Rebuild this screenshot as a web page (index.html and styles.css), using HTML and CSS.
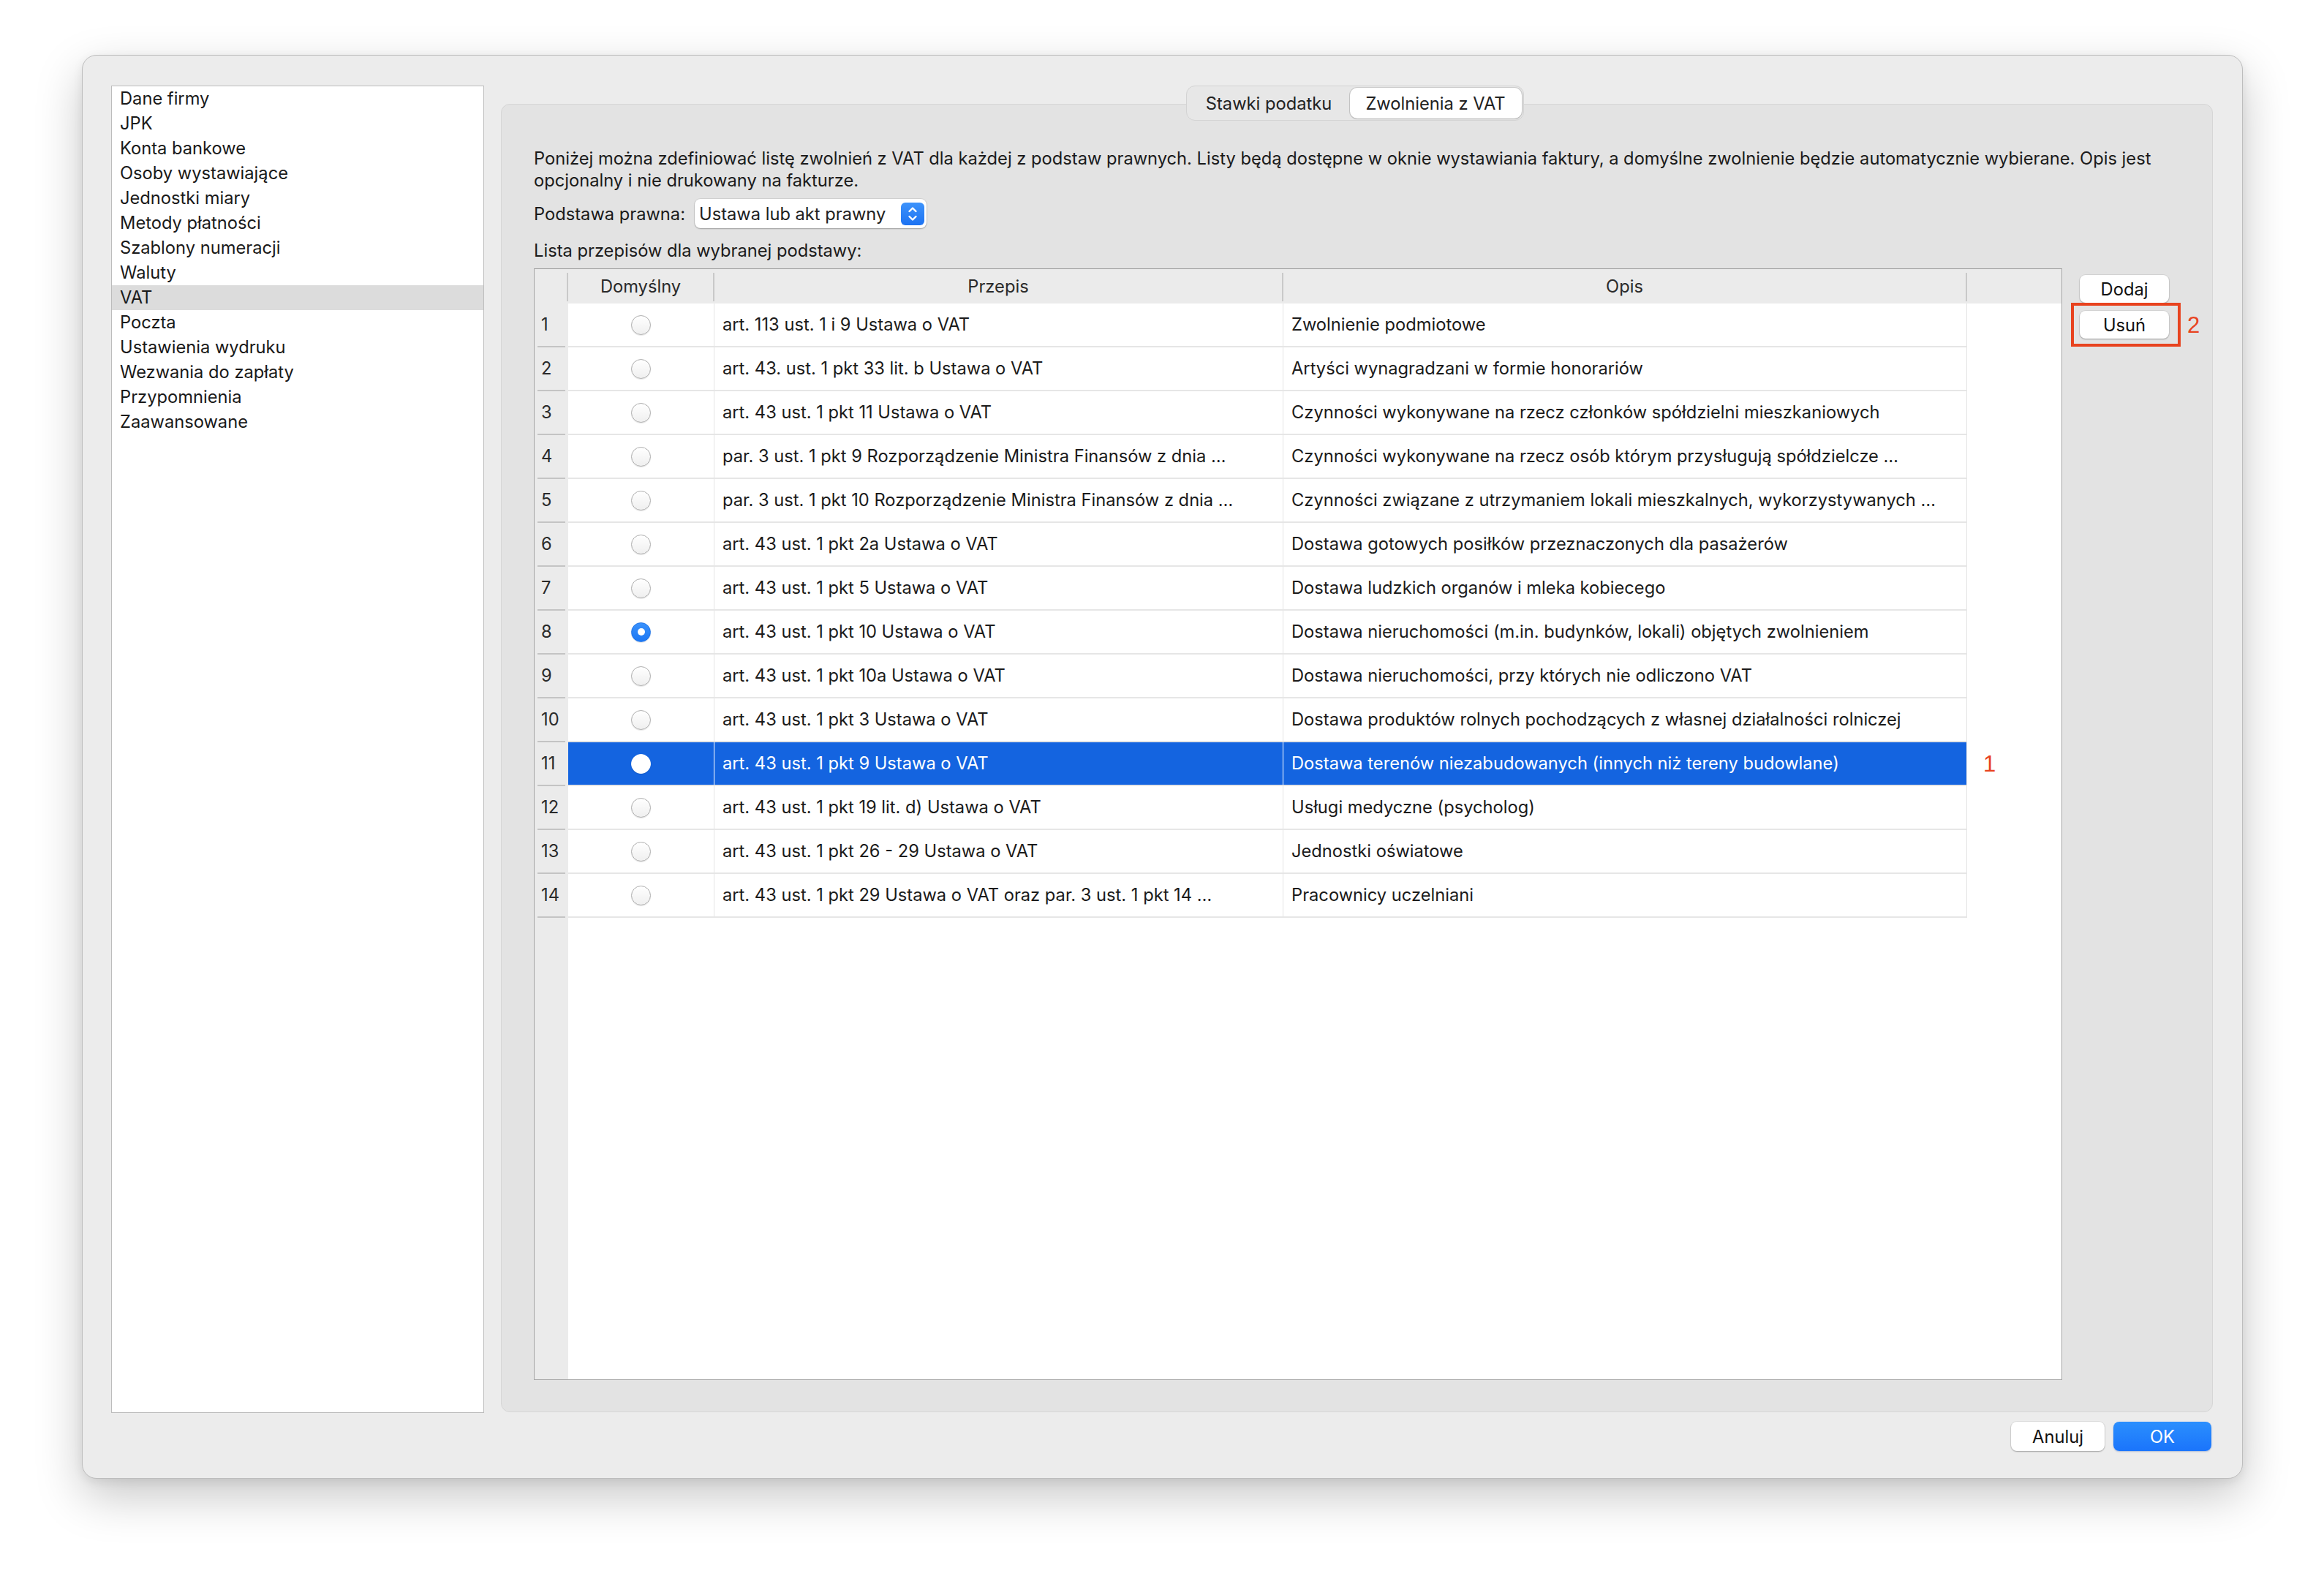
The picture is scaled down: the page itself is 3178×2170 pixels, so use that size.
FILE: index.html
```html
<!DOCTYPE html>
<html lang="pl">
<head>
<meta charset="utf-8">
<title>Ustawienia – VAT</title>
<link rel="stylesheet" href="styles.css">
</head>
<body>
<div class="stage">
  <div class="window">
    <div class="content">
      <ul class="sidebar">
        <li>Dane firmy</li>
        <li>JPK</li>
        <li>Konta bankowe</li>
        <li>Osoby wystawiające</li>
        <li>Jednostki miary</li>
        <li>Metody płatności</li>
        <li>Szablony numeracji</li>
        <li>Waluty</li>
        <li class="active">VAT</li>
        <li>Poczta</li>
        <li>Ustawienia wydruku</li>
        <li>Wezwania do zapłaty</li>
        <li>Przypomnienia</li>
        <li>Zaawansowane</li>
      </ul>
      <section class="tabview">
        <div class="tabs-row">
          <div class="segmented">
            <span class="seg">Stawki podatku</span>
            <span class="seg selected">Zwolnienia z VAT</span>
          </div>
        </div>
        <div class="panel-body">
          <p class="desc">Poniżej można zdefiniować listę zwolnień z VAT dla każdej z podstaw prawnych. Listy będą dostępne w oknie wystawiania faktury, a domyślne zwolnienie będzie automatycznie wybierane. Opis jest<br>opcjonalny i nie drukowany na fakturze.</p>
          <div class="basis">
            <span class="label">Podstawa prawna:</span>
            <div class="popup">
              <span class="popup-text">Ustawa lub akt prawny</span>
              <span class="popup-arrows">
                <svg width="32" height="31" viewBox="0 0 32 31"><path d="M11.5 12 L16 7.5 L20.5 12" /><path d="M11.5 19 L16 23.5 L20.5 19" /></svg>
              </span>
            </div>
          </div>
          <p class="list-label">Lista przepisów dla wybranej podstawy:</p>
          <div class="table-area">
            <div class="table">
              <div class="thead">
                <div class="th num"></div>
                <div class="th">Domyślny</div>
                <div class="th">Przepis</div>
                <div class="th">Opis</div>
                <div class="th last"></div>
              </div>
              <div class="tbody">
                <div class="numcol">
                  <div class="n">1</div><div class="n">2</div><div class="n">3</div><div class="n">4</div><div class="n">5</div><div class="n">6</div><div class="n">7</div><div class="n">8</div><div class="n">9</div><div class="n">10</div><div class="n">11</div><div class="n">12</div><div class="n">13</div><div class="n">14</div>
                </div>
                <div class="rows">
                  <div class="row"><div class="c rc"><span class="radio"></span></div><div class="c">art. 113 ust. 1 i 9 Ustawa o VAT</div><div class="c">Zwolnienie podmiotowe</div></div>
                  <div class="row"><div class="c rc"><span class="radio"></span></div><div class="c">art. 43. ust. 1 pkt 33 lit. b Ustawa o VAT</div><div class="c">Artyści wynagradzani w formie honorariów</div></div>
                  <div class="row"><div class="c rc"><span class="radio"></span></div><div class="c">art. 43 ust. 1 pkt 11 Ustawa o VAT</div><div class="c">Czynności wykonywane na rzecz członków spółdzielni mieszkaniowych</div></div>
                  <div class="row"><div class="c rc"><span class="radio"></span></div><div class="c">par. 3 ust. 1 pkt 9 Rozporządzenie Ministra Finansów z dnia …</div><div class="c">Czynności wykonywane na rzecz osób którym przysługują spółdzielcze …</div></div>
                  <div class="row"><div class="c rc"><span class="radio"></span></div><div class="c">par. 3 ust. 1 pkt 10 Rozporządzenie Ministra Finansów z dnia …</div><div class="c">Czynności związane z utrzymaniem lokali mieszkalnych, wykorzystywanych …</div></div>
                  <div class="row"><div class="c rc"><span class="radio"></span></div><div class="c">art. 43 ust. 1 pkt 2a Ustawa o VAT</div><div class="c">Dostawa gotowych posiłków przeznaczonych dla pasażerów</div></div>
                  <div class="row"><div class="c rc"><span class="radio"></span></div><div class="c">art. 43 ust. 1 pkt 5 Ustawa o VAT</div><div class="c">Dostawa ludzkich organów i mleka kobiecego</div></div>
                  <div class="row"><div class="c rc"><span class="radio on"></span></div><div class="c">art. 43 ust. 1 pkt 10 Ustawa o VAT</div><div class="c">Dostawa nieruchomości (m.in. budynków, lokali) objętych zwolnieniem</div></div>
                  <div class="row"><div class="c rc"><span class="radio"></span></div><div class="c">art. 43 ust. 1 pkt 10a Ustawa o VAT</div><div class="c">Dostawa nieruchomości, przy których nie odliczono VAT</div></div>
                  <div class="row"><div class="c rc"><span class="radio"></span></div><div class="c">art. 43 ust. 1 pkt 3 Ustawa o VAT</div><div class="c">Dostawa produktów rolnych pochodzących z własnej działalności rolniczej</div></div>
                  <div class="row sel"><div class="c rc"><span class="radio"></span></div><div class="c">art. 43 ust. 1 pkt 9 Ustawa o VAT</div><div class="c">Dostawa terenów niezabudowanych (innych niż tereny budowlane)</div><span class="mark mark1">1</span></div>
                  <div class="row"><div class="c rc"><span class="radio"></span></div><div class="c">art. 43 ust. 1 pkt 19 lit. d) Ustawa o VAT</div><div class="c">Usługi medyczne (psycholog)</div></div>
                  <div class="row"><div class="c rc"><span class="radio"></span></div><div class="c">art. 43 ust. 1 pkt 26 - 29 Ustawa o VAT</div><div class="c">Jednostki oświatowe</div></div>
                  <div class="row"><div class="c rc"><span class="radio"></span></div><div class="c">art. 43 ust. 1 pkt 29 Ustawa o VAT oraz par. 3 ust. 1 pkt 14 …</div><div class="c">Pracownicy uczelniani</div></div>
                </div>
              </div>
            </div>
            <div class="side-buttons">
              <button class="btn small">Dodaj</button>
              <button class="btn small">Usuń</button>
              <span class="highlight-box"></span>
              <span class="mark mark2">2</span>
            </div>
          </div>
        </div>
      </section>
    </div>
    <div class="footer">
      <button class="btn footer-btn">Anuluj</button>
      <button class="btn footer-btn primary">OK</button>
    </div>
  </div>
</div>
</body>
</html>
```

FILE: styles.css
```css
* { box-sizing: border-box; }

html, body {
  margin: 0;
  padding: 0;
  background: #ffffff;
}

body {
  width: 3178px;
  height: 2170px;
  font-family: Inter, "Noto Sans", sans-serif;
  font-size: 23.7px;
  color: #1b1b1b;
  overflow: hidden;
}

.stage {
  padding: 75px 0 0 112px;
}

.window {
  width: 2955px;
  height: 1947px;
  background: #ececec;
  border: 1px solid #bdbdbd;
  border-radius: 20px;
  box-shadow: 0 24px 64px rgba(0, 0, 0, 0.22), 0 4px 14px rgba(0, 0, 0, 0.08);
  padding: 41px 40px 37px 39px;
  display: flex;
  flex-direction: column;
}

.content {
  display: flex;
  gap: 23px;
  align-items: flex-start;
}

/* Sidebar */
.sidebar {
  list-style: none;
  margin: 0;
  padding: 0;
  width: 510px;
  height: 1815px;
  background: #ffffff;
  border: 1px solid #bcbcbc;
}

.sidebar li {
  height: 34px;
  line-height: 33px;
  padding-left: 11px;
  color: #1a1a1a;
}

.sidebar li.active {
  background: #dcdcdc;
}

/* Tab view */
.tabview {
  width: 2341px;
  height: 1789px;
  margin-top: 25px;
  background: #e3e3e3;
  border: 1px solid #d6d6d6;
  border-radius: 12px;
}

.tabs-row {
  display: flex;
  justify-content: center;
  margin-top: -26px;
  padding-right: 6px;
}

.segmented {
  display: flex;
  height: 48px;
  padding: 2px;
  background: #e7e7e7;
  border: 1px solid #d3d3d3;
  border-radius: 12px;
}

.seg {
  display: flex;
  align-items: center;
  justify-content: center;
  height: 42px;
  color: #222;
}

.seg:first-child {
  width: 221px;
}

.seg.selected {
  width: 235px;
  background: #ffffff;
  border-radius: 10px;
  box-shadow: 0 0 0 1px rgba(0, 0, 0, 0.12), 0 1px 2px rgba(0, 0, 0, 0.12);
}

.panel-body {
  padding: 37px 0 0 44px;
}

.desc {
  margin: 0;
  line-height: 30px;
  color: #1b1b1b;
}

.basis {
  display: flex;
  align-items: center;
  margin-top: 10px;
  height: 40px;
}

.label {
  width: 220px;
}

.popup {
  display: flex;
  align-items: center;
  justify-content: space-between;
  width: 317px;
  height: 40px;
  padding: 0 3px 0 6px;
  background: #ffffff;
  border-radius: 8px;
  box-shadow: 0 0 0 1px rgba(0, 0, 0, 0.07), 0 1px 2px rgba(0, 0, 0, 0.25);
}

.popup-text {
  color: #222;
}

.popup-arrows {
  width: 32px;
  height: 31px;
  border-radius: 6px;
  background: linear-gradient(#3d93fb, #1c72f2);
  display: flex;
}

.popup-arrows path {
  fill: none;
  stroke: #ffffff;
  stroke-width: 2.4;
  stroke-linecap: round;
  stroke-linejoin: round;
}

.list-label {
  margin: 16px 0 0 0;
  line-height: 30px;
}

.table-area {
  display: flex;
  gap: 24px;
  margin-top: 9px;
}

/* Table */
.table {
  width: 2090px;
  height: 1520px;
  background: #ffffff;
  border: 1px solid #a7a7a7;
  border-top-color: #9a9a9a;
  display: flex;
  flex-direction: column;
}

.thead {
  display: grid;
  grid-template-columns: 46px 200px 778px 935px 1fr;
  height: 47px;
  background: #ebebeb;
  flex: none;
}

.th {
  display: flex;
  align-items: center;
  justify-content: center;
  color: #2a2a2a;
  border-right: 2px solid #c9c9c9;
  margin: 5px 0 3px 0;
  padding-bottom: 3px;
}

.th.last {
  border-right: none;
}

.tbody {
  flex: 1;
  display: flex;
}

.numcol {
  width: 46px;
  background: #ebebeb;
  flex: none;
}

.n {
  position: relative;
  height: 60px;
  line-height: 57px;
  padding-left: 9px;
  color: #2a2a2a;
}

.n::after {
  content: "";
  position: absolute;
  left: 4px;
  right: 4px;
  bottom: 0;
  height: 2px;
  background: #c4c4c4;
}

.rows {
  width: 1913px;
  flex: none;
}

.row {
  position: relative;
  display: grid;
  grid-template-columns: 200px 778px 935px;
  height: 60px;
  border-bottom: 2px solid #e6e6e6;
}

.c {
  display: flex;
  align-items: center;
  padding-left: 11px;
  padding-bottom: 2px;
  border-right: 1px solid #e4e4e4;
  white-space: nowrap;
  overflow: hidden;
  color: #1b1b1b;
}

.c.rc {
  justify-content: center;
  padding-left: 0;
  padding-bottom: 0;
}

.row.sel .c {
  background: #1464e0;
  color: #ffffff;
  border-right-color: #ffffff;
}

.row.sel .c:last-of-type {
  border-right-color: #e4e4e4;
}

.row.sel {
  border-bottom-color: #e6e6e6;
}

.radio {
  width: 27px;
  height: 27px;
  border-radius: 50%;
  background: linear-gradient(#ffffff, #efefef);
  border: 1px solid #adadad;
  box-shadow: 0 1px 1px rgba(0, 0, 0, 0.1);
  display: flex;
  align-items: center;
  justify-content: center;
}

.radio.on {
  background: linear-gradient(#3a92fc, #1b77f4);
  border-color: #1e73e8;
}

.radio.on::after {
  content: "";
  width: 10px;
  height: 10px;
  border-radius: 50%;
  background: #ffffff;
}

.row.sel .radio {
  background: #ffffff;
  border-color: #ffffff;
}

/* Annotations */
.mark {
  position: absolute;
  font-family: "Liberation Sans", Arial, sans-serif;
  color: #e8431f;
  font-size: 31px;
  line-height: 1;
}

.mark1 {
  left: 1935px;
  top: 14px;
}

.side-buttons {
  position: relative;
  display: flex;
  flex-direction: column;
  gap: 11px;
  padding-top: 9px;
  width: 122px;
}

.highlight-box {
  position: absolute;
  left: -12px;
  top: 47px;
  width: 150px;
  height: 60px;
  border: 4px solid #e8431f;
}

.mark2 {
  left: 147px;
  top: 62px;
}

/* Buttons */
.btn {
  font-family: inherit;
  font-size: 23.7px;
  color: #111;
  background: #ffffff;
  border: none;
  border-radius: 8px;
  box-shadow: 0 0 0 1px rgba(0, 0, 0, 0.06), 0 1px 2px rgba(0, 0, 0, 0.28);
  padding: 0;
  margin: 0;
}

.btn.small {
  width: 122px;
  height: 38px;
}

.footer {
  display: flex;
  justify-content: flex-end;
  gap: 12px;
  margin-top: 12px;
  padding-right: 2px;
}

.footer-btn {
  height: 40px;
  width: 128px;
}

.footer-btn.primary {
  width: 134px;
  color: #ffffff;
  background: linear-gradient(#2b8ffe, #1a74fb);
  box-shadow: 0 1px 2px rgba(0, 60, 160, 0.3);
}
```
